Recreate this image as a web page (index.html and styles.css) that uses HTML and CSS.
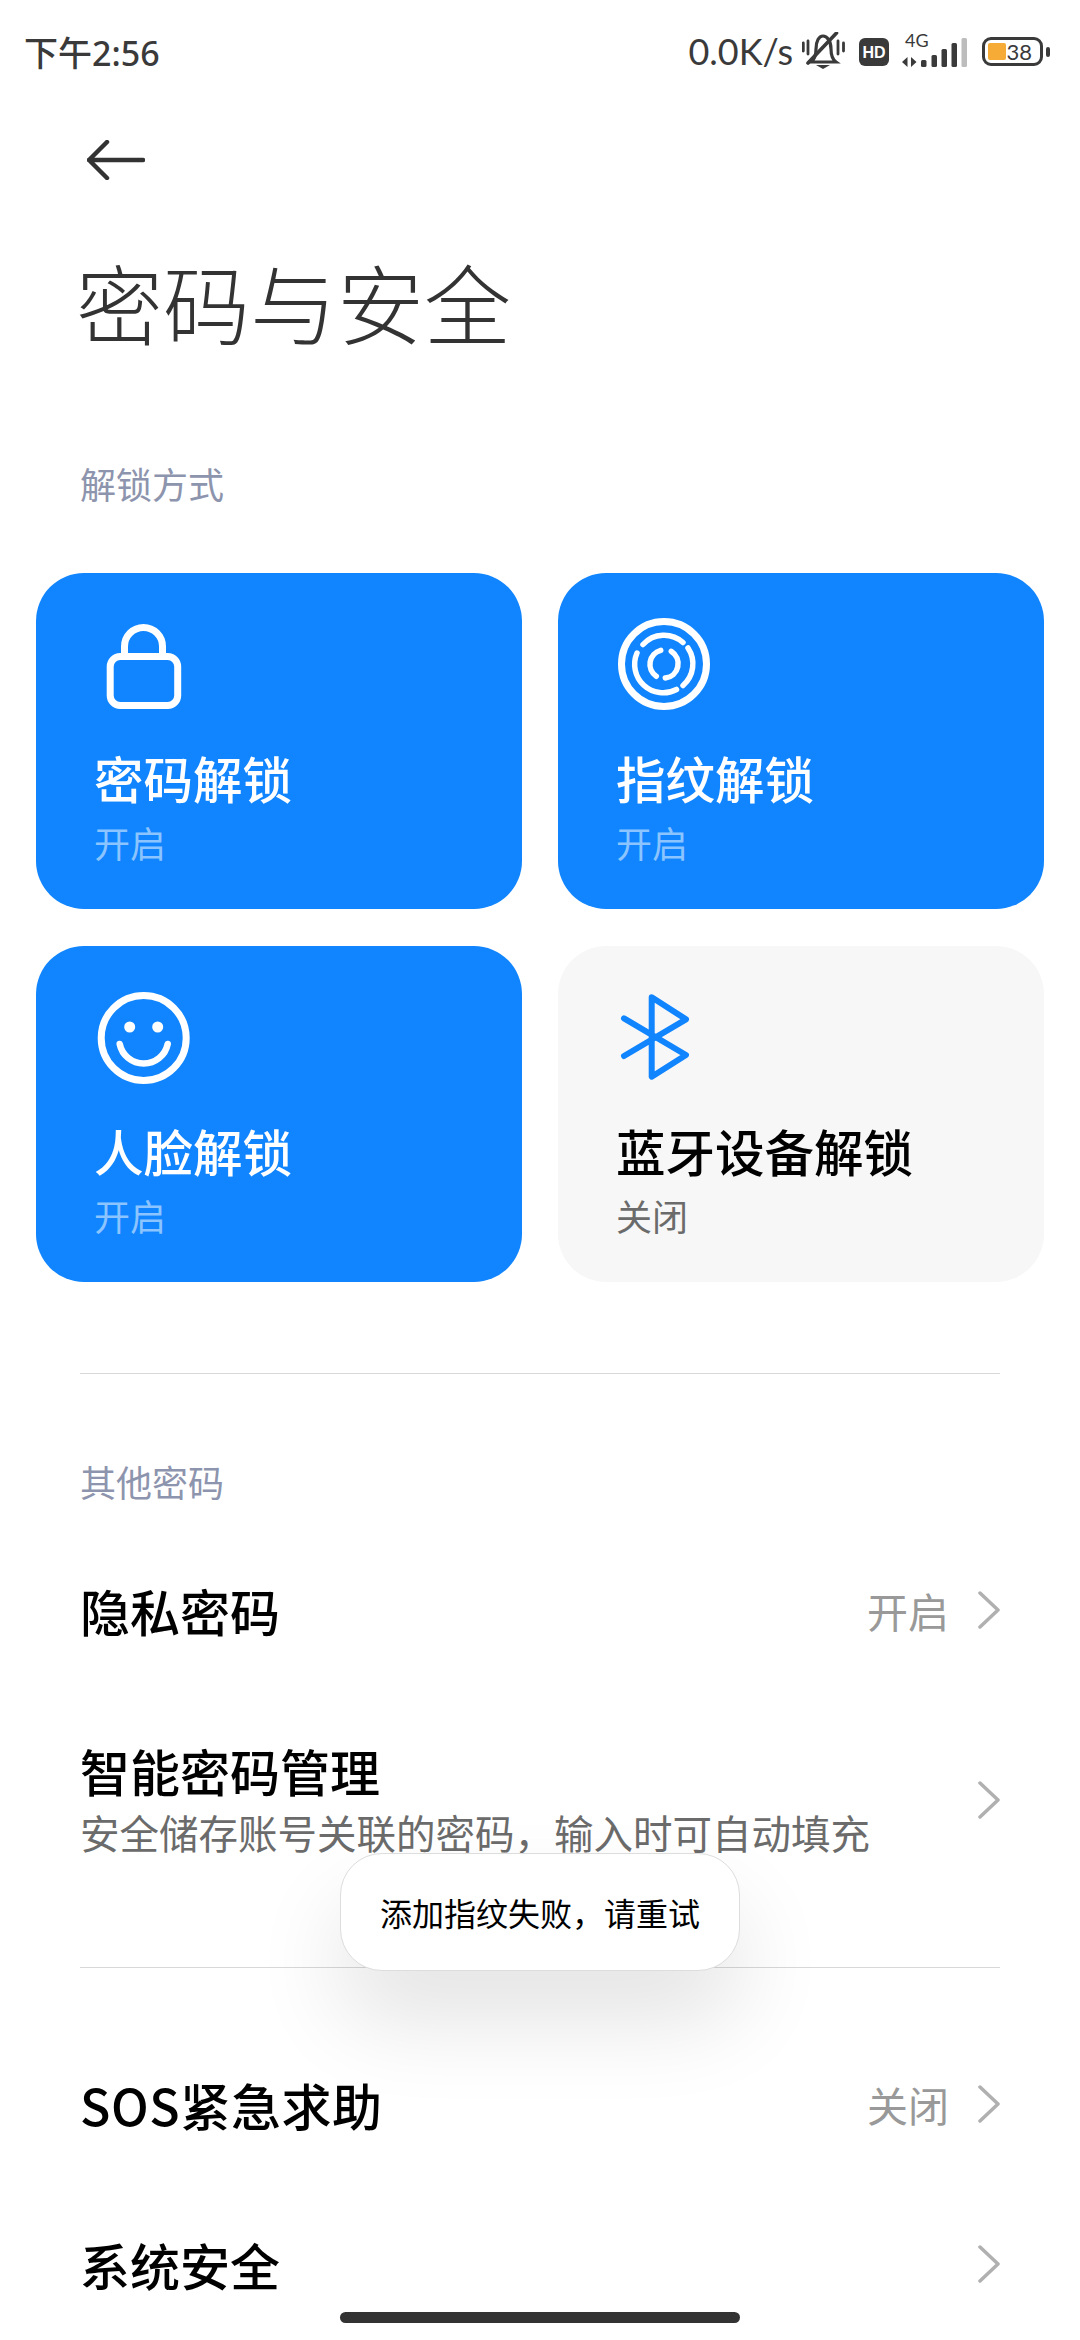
FILE: index.html
```html
<!DOCTYPE html>
<html lang="zh-CN">
	<head>
		<meta charset="UTF-8" />
		<title>密码与安全</title>
		<link rel="stylesheet" href="styles.css">
	</head>
	<body>
		<div class="screen">
			<div class="status-bar">
				<span class="time">下午2:56</span>
				<div class="status-right">
					<span class="speed">0.0K/s</span>
					<svg class="ic-bell" width="44" height="38" viewBox="0 0 44 38" fill="none" stroke="#3a3a3a">
						<path d="M9 30c4-3 5-7 5-13 0-8 3-13 7-13s8 5 8 13c0 6 1 10 5 13z" stroke-width="3.200"/>
						<path d="M34.500 1L6 31" stroke-width="3.600" stroke-linecap="round"/>
						<path d="M1.300 11v8M6 9v13M36 9v13M41.500 11v8" stroke-width="2.800" stroke-linecap="round"/>
						<path d="M14 33h14l-7 4z" fill="#3a3a3a" stroke="none"/>
					</svg>
					<svg class="ic-hd" width="30" height="28" viewBox="0 0 30 28">
						<rect width="30" height="28" rx="6" fill="#3a3a3a"/>
						<text x="15" y="19.500" text-anchor="middle" class="hd-text">HD</text>
					</svg>
					<svg class="ic-signal" width="66" height="46" viewBox="0 -10 66 46">
						<text x="4" y="15" class="net-text">4G</text>
						<path d="M6.500 25v10L1 30zM10 25v10l5.500-5z" fill="#3a3a3a"/>
						<rect x="20" y="28" width="5.500" height="7" rx="1.500" fill="#3a3a3a"/>
						<rect x="30.500" y="23" width="5.500" height="12" rx="1.500" fill="#3a3a3a"/>
						<rect x="40.500" y="17" width="5.500" height="18" rx="1.500" fill="#3a3a3a"/>
						<rect x="50.500" y="11" width="5.500" height="24" rx="1.500" fill="#3a3a3a"/>
						<rect x="60.500" y="6" width="5.500" height="29" rx="1.500" fill="#bcbcbc"/>
					</svg>
					<div class="battery">
						<div class="battery-body">
							<div class="battery-fill"></div>
							<span class="battery-num">38</span>
						</div>
						<div class="battery-nub"></div>
					</div>
				</div>
			</div>

			<div class="back-row">
				<svg width="58" height="40" viewBox="0 0 58 40" fill="none" stroke="#333" stroke-width="4.500" stroke-linecap="round" stroke-linejoin="round">
					<path d="M20 2L2 20l18 18M2 20h54"/>
				</svg>
			</div>

			<h1 class="page-title">密码与安全</h1>

			<div class="section-label">解锁方式</div>

			<div class="card-grid">
				<div class="card on">
					<svg class="card-icon" width="92" height="92" viewBox="0 0 92 92" fill="none" stroke="#fff" stroke-width="7">
						<rect x="14.200" y="38.500" width="67.500" height="49" rx="10"/>
						<path d="M28.500 38V28.500a19 19 0 0 1 38 0V38"/>
					</svg>
					<div class="card-title">密码解锁</div>
					<div class="card-sub">开启</div>
				</div>
				<div class="card on">
					<svg class="card-icon" width="92" height="92" viewBox="0 0 92 92" fill="none" stroke="#fff" stroke-linecap="round">
						<circle cx="46" cy="46" r="42.500" stroke-width="7"/>
						<g stroke-width="5.500">
							<path d="M25 26.500A28.500 28.500 0 0 1 65 24.500"/>
							<path d="M70 30A28.500 28.500 0 0 1 65 67.500"/>
							<path d="M58.500 71.500A28.500 28.500 0 0 1 19 35"/>
							<path d="M42.700 32.300A14.500 14.500 0 0 0 38.300 58.300"/>
							<path d="M53.300 33.300A14.500 14.500 0 0 1 47.300 60"/>
						</g>
					</svg>
					<div class="card-title">指纹解锁</div>
					<div class="card-sub">开启</div>
				</div>
				<div class="card on">
					<svg class="card-icon" width="92" height="92" viewBox="-1.700 -1 92 92" fill="none" stroke="#fff">
						<circle cx="46" cy="46" r="42.500" stroke-width="7"/>
						<circle cx="32" cy="35" r="5.500" fill="#fff" stroke="none"/>
						<circle cx="60" cy="35" r="5.500" fill="#fff" stroke="none"/>
						<path d="M22 52a24.500 24.500 0 0 0 48 0" stroke-width="6.500" stroke-linecap="round"/>
					</svg>
					<div class="card-title">人脸解锁</div>
					<div class="card-sub">开启</div>
				</div>
				<div class="card off">
					<svg class="card-icon" width="92" height="92" viewBox="0 0 92 92" fill="none" stroke="#1085ff" stroke-width="6" stroke-linejoin="round" stroke-linecap="round">
						<path d="M6 27.300L68 64 33.700 85.700V6.300L68 28.300 6 65"/>
					</svg>
					<div class="card-title">蓝牙设备解锁</div>
					<div class="card-sub">关闭</div>
				</div>
			</div>

			<div class="divider top"></div>

			<div class="section-label">其他密码</div>

			<div class="row first-row">
				<div class="row-text">
					<div class="row-title">隐私密码</div>
				</div>
				<span class="row-value">开启</span>
				<svg class="chevron" width="22" height="38" viewBox="0 0 22 38" fill="none" stroke="#b0b0b0" stroke-width="3.500" stroke-linecap="round" stroke-linejoin="round"><path d="M2 2l18 17L2 36"/></svg>
			</div>
			<div class="row double">
				<div class="row-text">
					<div class="row-title">智能密码管理</div>
					<div class="row-desc">安全储存账号关联的密码，输入时可自动填充</div>
				</div>
				<svg class="chevron" width="22" height="38" viewBox="0 0 22 38" fill="none" stroke="#b0b0b0" stroke-width="3.500" stroke-linecap="round" stroke-linejoin="round"><path d="M2 2l18 17L2 36"/></svg>
			</div>

			<div class="divider bottom"></div>

			<div class="row sos">
				<div class="row-text">
					<div class="row-title">SOS紧急求助</div>
				</div>
				<span class="row-value">关闭</span>
				<svg class="chevron" width="22" height="38" viewBox="0 0 22 38" fill="none" stroke="#b0b0b0" stroke-width="3.500" stroke-linecap="round" stroke-linejoin="round"><path d="M2 2l18 17L2 36"/></svg>
			</div>
			<div class="row">
				<div class="row-text">
					<div class="row-title">系统安全</div>
				</div>
				<svg class="chevron" width="22" height="38" viewBox="0 0 22 38" fill="none" stroke="#b0b0b0" stroke-width="3.500" stroke-linecap="round" stroke-linejoin="round"><path d="M2 2l18 17L2 36"/></svg>
			</div>

			<!-- Toast -->
			<div class="toast">添加指纹失败，请重试</div>
			<div class="home-bar"></div>
		</div>
	</body>
</html>
```

FILE: styles.css
```css
* {
	box-sizing: border-box;
}
body {
	margin: 0;
	background: #fff;
	font-family: "Noto Sans CJK SC", "Noto Sans", sans-serif;
	color: #000;
}
.screen {
	position: relative;
	width: 1080px;
	height: 2340px;
	overflow: hidden;
}

/* Status bar */
.status-bar {
	display: flex;
	justify-content: space-between;
	align-items: center;
	height: 100px;
	padding: 0 30px 0 24px;
	color: #3a3a3a;
}
.time {
	font-size: 34px;
	font-family: "Noto Sans", "Noto Sans CJK SC", sans-serif;
	font-weight: 500;
	padding-top: 2px;
}
.status-right {
	display: flex;
	align-items: center;
}
.speed {
	font-family: "Lato", sans-serif;
	font-size: 36px;
	padding-top: 2px;
	margin-right: 9px;
}
.ic-bell {
	margin-top: 2px;
}
.ic-hd {
	margin-left: 13px;
	margin-top: 4px;
}
.ic-signal {
	margin-left: 12px;
	margin-bottom: 10px;
}
.hd-text {
	font: bold 16px "Liberation Sans", sans-serif;
	fill: #fff;
}
.net-text {
	font: 18px "Lato", sans-serif;
	fill: #3a3a3a;
}
.battery {
	display: flex;
	align-items: center;
	margin-left: 15px;
	margin-top: 3px;
}
.battery-body {
	position: relative;
	display: flex;
	align-items: center;
	justify-content: flex-end;
	width: 61px;
	height: 29px;
	padding-right: 8px;
	border: 3.500px solid #3a3a3a;
	border-radius: 9px;
}
.battery-fill {
	position: absolute;
	left: 3px;
	top: 3px;
	bottom: 3px;
	width: 18px;
	background: #f5ab35;
	border-radius: 2px;
}
.battery-num {
	position: relative;
	font: 22px "Lato", sans-serif;
	color: #3a3a3a;
}
.battery-nub {
	width: 4px;
	height: 10px;
	margin-left: 3px;
	background: #3a3a3a;
	border-radius: 2px;
}

/* Header */
.back-row {
	padding: 40px 0 0 87px;
	height: 127px;
}
.back-row svg {
	display: block;
}
.page-title {
	margin: 0 0 83px;
	padding-left: 76px;
	height: 148px;
	font-size: 87px;
	line-height: 148px;
	font-weight: 300;
	color: #333;
}
.section-label {
	padding-left: 80px;
	font-size: 36px;
	line-height: 50px;
	color: #8d94ad;
}

/* Cards */
.card-grid {
	display: grid;
	grid-template-columns: 486px 486px;
	grid-auto-rows: 336px;
	column-gap: 36px;
	row-gap: 37px;
	padding-left: 36px;
	margin-top: 65px;
}
.card {
	padding: 45px 0 0 60px;
	border-radius: 48px;
}
.card.on {
	background: #1085ff;
	color: #fff;
}
.card.off {
	background: #f7f7f7;
}
.card-icon {
	display: block;
	overflow: visible;
}
.card-title {
	margin: 35px 0 0 -2px;
	font-size: 49.500px;
	line-height: 66px;
	font-weight: 500;
}
.card-sub {
	margin: 6px 0 0 -2px;
	font-size: 36px;
	line-height: 50px;
}
.card.on .card-sub {
	color: #8cc4ff;
}
.card.off .card-sub {
	color: #6b6b6b;
}

/* List */
.divider {
	height: 1px;
	margin: 0 80px;
	background: #d8d8d8;
}
.divider.top {
	margin-top: 91px;
	margin-bottom: 82px;
}
.divider.bottom {
	margin-top: 58px;
}
.row {
	display: flex;
	align-items: center;
	height: 160px;
	padding: 0 80px;
}
.row.first-row {
	margin-top: 24px;
}
.row.double {
	height: 219px;
}
.row.sos {
	margin-top: 56px;
}
.row.sos .row-title {
	letter-spacing: 0.600px;
}
.row-text {
	flex: 1;
	min-width: 0;
}
.row-title {
	font-size: 50px;
	line-height: 60px;
	font-weight: 500;
}
.row-desc {
	margin-top: 4px;
	font-size: 39.500px;
	line-height: 56px;
	color: #6b6b6b;
}
.row-value {
	font-size: 41px;
	color: #999;
	margin-right: 29px;
}
.chevron {
	flex-shrink: 0;
}

/* Toast */
.toast {
	position: absolute;
	left: 340px;
	top: 1853px;
	width: 400px;
	height: 118px;
	display: flex;
	align-items: center;
	justify-content: center;
	background: #fff;
	border: 1px solid #ddd;
	border-radius: 42px;
	font-size: 32px;
	white-space: nowrap;
	box-shadow: 0 50px 90px rgba(0, 0, 0, 0.11);
}
.home-bar {
	position: absolute;
	left: 340px;
	top: 2312px;
	width: 400px;
	height: 11px;
	border-radius: 6px;
	background: #333;
}
```
